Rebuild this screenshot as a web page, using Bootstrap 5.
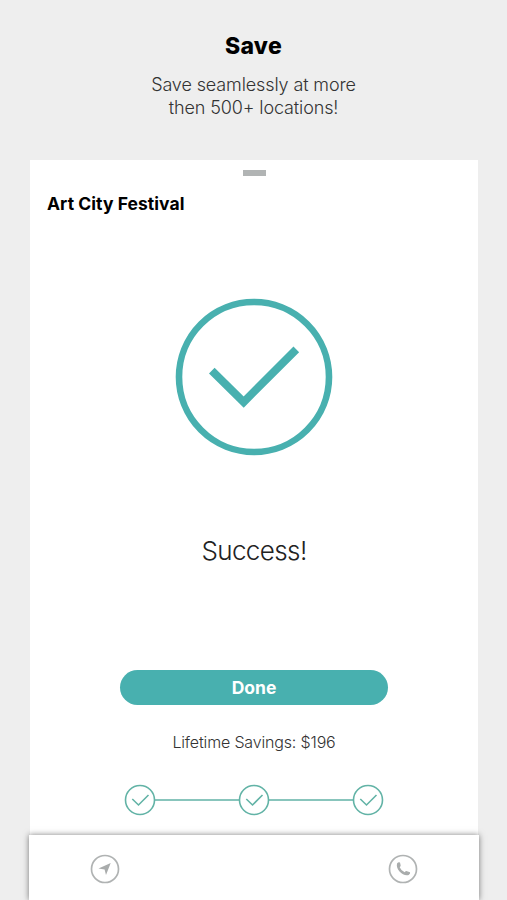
<!DOCTYPE html>
<html lang="en">
<head>
<meta charset="utf-8">
<meta name="viewport" content="width=device-width, initial-scale=1">
<title>Save</title>
<link rel="stylesheet" href="https://cdn.jsdelivr.net/npm/bootstrap@5.3.0/dist/css/bootstrap.min.css">
<style>
:root{--teal:#48b0af}
body{background:#eee;font-family:Inter,"Open Sans",sans-serif;color:#000}
.screen{height:900px;width:507px}
.promo{height:160px;padding-top:32px}
.promo-title{font-size:23px;line-height:28px;font-weight:800;letter-spacing:.3px}
.promo-text{font-size:18px;line-height:23px;font-weight:300;letter-spacing:-.12px;color:#333;margin-top:13px}
.sheet{width:448px;height:675px;margin-left:30px;background:#fff}
.grabber{width:23px;height:6px;background:#b1b4b4;margin-top:10px}
.venue{font-size:17.5px;line-height:24px;font-weight:700;letter-spacing:.05px;margin:16px 0 0 17px}
.big-check{width:158px;height:158px;margin-top:82px}
.success{font-size:26px;line-height:32px;font-weight:300;letter-spacing:-.6px;color:#222;margin-top:79px}
.done-btn{--bs-btn-bg:var(--teal);--bs-btn-color:#fff;--bs-btn-hover-bg:#3c9c9b;--bs-btn-hover-color:#fff;width:268px;height:35px;font-size:17.5px;line-height:34px;font-weight:700;margin-top:103px}
.savings{font-size:16px;line-height:22px;font-weight:300;letter-spacing:-.16px;color:#333;margin-top:26px}
.steps{width:260px;height:32px;margin-top:31px}
.tabs{width:450px;height:65px;margin-left:29px;background:#fff;box-shadow:0 0 6px rgba(0,0,0,.5);padding:2px 61px 0}
</style>
</head>
<body>
<main class="screen d-flex flex-column overflow-hidden">
  <header class="promo text-center">
    <h1 class="promo-title mb-0">Save</h1>
    <p class="promo-text mb-0">Save seamlessly at more<br>then 500+ locations!</p>
  </header>
  <section class="sheet d-flex flex-column align-items-center flex-shrink-0">
    <div class="grabber"></div>
    <h2 class="venue mb-0 align-self-start">Art City Festival</h2>
    <svg class="big-check" viewBox="0 0 158 158" fill="none" stroke="#48b0af">
      <circle cx="79" cy="79" r="75" stroke-width="6.6"/>
      <path d="M36.800 72.700 68.700 104 121.300 51.300" stroke-width="8"/>
    </svg>
    <div class="success">Success!</div>
    <button type="button" class="btn done-btn rounded-pill border-0 p-0">Done</button>
    <div class="savings">Lifetime Savings: $196</div>
    <svg class="steps" viewBox="0 0 260 32" fill="none" stroke="#62b3a6" stroke-width="1.600">
      <path d="M31 16H115M145 16H229"/>
      <circle cx="16" cy="16" r="14.500"/><path d="M8.300 15 14.500 21 24.500 11"/>
      <circle cx="130" cy="16" r="14.500"/><path d="M122.300 15 128.500 21 138.500 11"/>
      <circle cx="244" cy="16" r="14.500"/><path d="M236.300 15 242.500 21 252.500 11"/>
    </svg>
  </section>
  <nav class="tabs position-relative d-flex justify-content-between align-items-center flex-shrink-0">
    <svg width="30" height="30" viewBox="0 0 30 30">
      <circle cx="15" cy="15" r="13.500" fill="none" stroke="#b0b3b3" stroke-width="1.700"/>
      <path d="M20.700 9 16 21 14.600 15.600 8.500 14.500Z" fill="#a9acac"/>
    </svg>
    <svg width="30" height="30" viewBox="0 0 30 30">
      <circle cx="15" cy="15" r="13.500" fill="none" stroke="#b0b3b3" stroke-width="1.700"/>
      <path d="M9 9.500Q10.500 7.500 12 8.500L12.700 11.500Q12.500 12.500 11.700 13.200Q13 16.500 16.700 18.200Q17.800 16.800 19 17.200L22 18.300Q22.700 19.500 20.700 21C15.500 22.800 7.500 16 9 9.500Z" fill="#a9acac"/>
    </svg>
  </nav>
</main>
<script src="https://cdn.jsdelivr.net/npm/bootstrap@5.3.0/dist/js/bootstrap.bundle.min.js"></script>
</body>
</html>
